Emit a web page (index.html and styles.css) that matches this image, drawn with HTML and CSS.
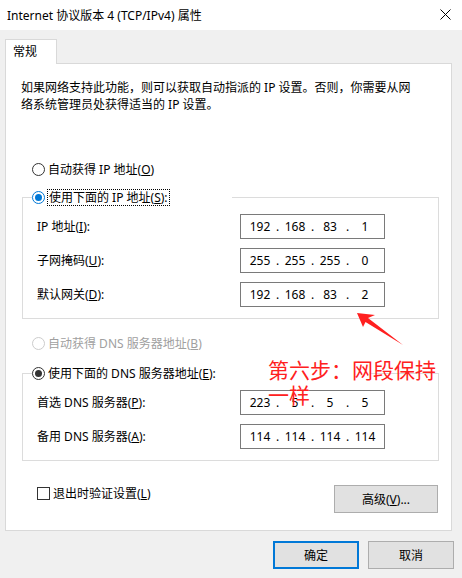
FILE: index.html
```html
<!DOCTYPE html>
<html lang="zh-CN">
<head>
    <meta charset="UTF-8">
    <title>Internet 协议版本 4 (TCP/IPv4) 属性</title>
    <link rel="stylesheet" href="styles.css">
</head>
<body>

<!-- Title bar -->
<div class="titlebar">
    <span class="title">Internet 协议版本 4 (TCP/IPv4) 属性</span>
    <svg class="close" width="11" height="11" viewBox="0 0 11 11">
        <path d="M0.5 0.5 L10.5 10.5 M10.5 0.5 L0.5 10.5" stroke="#000" stroke-width="1" fill="none"/>
    </svg>
</div>

<!-- Tabs -->
<div class="tabs">
    <div class="tab">常规</div>
</div>

<div class="panel">
    <p class="desc">如果网络支持此功能，则可以获取自动指派的 IP 设置。否则，你需要从网<br>络系统管理员处获得适当的 IP 设置。</p>

    <div class="option first"><span class="radio"></span>自动获得 IP 地址(<u>O</u>)</div>

    <fieldset class="group group-ip">
        <legend class="option legend-ip"><span class="radio checked active"></span><span class="focus-ring">使用下面的 IP 地址(<u>S</u>):</span></legend>
        <div class="fields">
            <div class="field">
                <span>IP 地址(<u>I</u>):</span>
                <div class="ip"><span>192</span><span>.</span><span>168</span><span>.</span><span>83</span><span>.</span><span>1</span></div>
            </div>
            <div class="field">
                <span>子网掩码(<u>U</u>):</span>
                <div class="ip"><span>255</span><span>.</span><span>255</span><span>.</span><span>255</span><span>.</span><span>0</span></div>
            </div>
            <div class="field">
                <span>默认网关(<u>D</u>):</span>
                <div class="ip"><span>192</span><span>.</span><span>168</span><span>.</span><span>83</span><span>.</span><span>2</span></div>
            </div>
        </div>
    </fieldset>

    <div class="option dns-auto disabled"><span class="radio"></span>自动获得 DNS 服务器地址(<u>B</u>)</div>

    <fieldset class="group group-dns">
        <legend class="option legend-dns"><span class="radio checked"></span>使用下面的 DNS 服务器地址(<u>E</u>):</legend>
        <div class="fields">
            <div class="field">
                <span>首选 DNS 服务器(<u>P</u>):</span>
                <div class="ip"><span>223</span><span>.</span><span>5</span><span>.</span><span>5</span><span>.</span><span>5</span></div>
            </div>
            <div class="field">
                <span>备用 DNS 服务器(<u>A</u>):</span>
                <div class="ip"><span>114</span><span>.</span><span>114</span><span>.</span><span>114</span><span>.</span><span>114</span></div>
            </div>
        </div>
    </fieldset>

    <div class="panel-footer">
        <div class="check-row"><span class="checkbox"></span>退出时验证设置(<u>L</u>)</div>
        <button class="btn advanced">高级(<u>V</u>)...</button>
    </div>
</div>

<!-- Dialog buttons -->
<div class="dialog-buttons">
    <button class="btn default">确定</button>
    <button class="btn">取消</button>
</div>

<!-- Annotation overlay -->
<svg class="arrow" width="60" height="42" viewBox="0 0 60 42">
    <polygon points="7,5 25,7 18,10 53,37 15.5,14 13,19" fill="#ff2020"/>
</svg>
<div class="note">第六步：网段保持一样</div>

</body>
</html>
```

FILE: styles.css
```css
html, body {
    margin: 0;
    padding: 0;
    height: 100%;
}

body {
    position: relative;
    background-color: #f0f0f0;
    font-family: "Noto Sans", "Noto Sans CJK SC", sans-serif;
    font-size: 12px;
    line-height: 17px;
    color: #000;
}

u {
    text-decoration: underline;
    text-underline-offset: 1px;
}

/* Title bar */
.titlebar {
    height: 30px;
    background-color: #fff;
    display: flex;
    align-items: center;
    justify-content: space-between;
    padding: 0 11px 0 7px;
}

.close {
    display: block;
    margin-top: -1px;
}

/* Tabs */
.tabs {
    display: flex;
    padding: 9px 0 0 5px;
}

.tab {
    position: relative;
    z-index: 1;
    width: 52px;
    height: 25px;
    box-sizing: border-box;
    padding: 3px 0 0 7px;
    margin-bottom: -1px;
    background-color: #fff;
    border: 1px solid #d9d9d9;
    border-bottom: none;
}

/* Main panel */
.panel {
    width: 447px;
    margin-left: 5px;
    box-sizing: border-box;
    background-color: #fff;
    border: 1px solid #d9d9d9;
    padding-bottom: 17px;
}

.desc {
    margin: 15px 0 0 15px;
}

.option {
    display: flex;
    align-items: center;
    height: 17px;
}

.option.first {
    margin: 48px 0 0 26px;
}

.option.dns-auto {
    margin: 16px 0 0 26px;
}

.option.disabled {
    color: #a0a0a0;
}

.radio {
    width: 13px;
    height: 13px;
    box-sizing: border-box;
    border: 1px solid #333;
    border-radius: 50%;
    background-color: #fff;
    margin-right: 3px;
    flex-shrink: 0;
    display: flex;
    align-items: center;
    justify-content: center;
}

.radio.checked::after {
    content: "";
    width: 7px;
    height: 7px;
    border-radius: 50%;
    background-color: #333;
}

.radio.active {
    border-color: #0078d7;
}

.radio.active::after {
    background-color: #0078d7;
}

.disabled .radio {
    border-color: #cccccc;
}

.focus-ring {
    border: 1px dotted #000;
    padding: 0 1px;
    margin-left: -1px;
    line-height: 15px;
}

/* Group boxes */
.group {
    width: 417px;
    box-sizing: border-box;
    margin: 0 0 0 16px;
    padding: 8px 0 11px 0;
    border: 1px solid #dcdcdc;
    min-width: 0;
}

.group-ip {
    margin-top: 11px;
}

.group-dns {
    margin-top: 13px;
}

.group legend {
    margin-left: 9px;
    padding: 0;
    background-color: #fff;
}

.legend-ip {
    width: 200px;
}

.legend-dns {
    width: 338px;
}

.fields {
    display: flex;
    flex-direction: column;
    gap: 9px;
}

.field {
    display: grid;
    grid-template-columns: 203px 145px;
    align-items: center;
    padding-left: 14px;
}

.ip {
    height: 25px;
    box-sizing: border-box;
    border: 1px solid #7a7a7a;
    padding-left: 5px;
    display: grid;
    grid-template-columns: 28px 7px 28px 7px 28px 7px 28px;
    align-items: center;
    text-align: center;
}

/* Footer of panel */
.panel-footer {
    display: flex;
    justify-content: space-between;
    align-items: flex-start;
    margin: 24px 13px 0 31px;
}

.check-row {
    display: flex;
    align-items: center;
    height: 17px;
}

.checkbox {
    width: 13px;
    height: 13px;
    box-sizing: border-box;
    border: 1px solid #333;
    background-color: #fff;
    margin-right: 3px;
}

.btn {
    font-family: inherit;
    font-size: 12px;
    color: #000;
    height: 28px;
    box-sizing: border-box;
    background-color: #e1e1e1;
    border: 1px solid #adadad;
    padding: 0;
    cursor: pointer;
}

.btn.advanced {
    width: 104px;
}

.dialog-buttons {
    display: flex;
    justify-content: flex-end;
    gap: 9px;
    margin-top: 10px;
    padding-right: 8px;
}

.dialog-buttons .btn {
    width: 86px;
}

.btn.default {
    border: 2px solid #0078d7;
}

/* Annotation */
.arrow {
    position: absolute;
    left: 350px;
    top: 308px;
}

.note {
    position: absolute;
    left: 268px;
    top: 357px;
    width: 172px;
    font-family: "Noto Sans CJK SC", sans-serif;
    font-size: 21px;
    line-height: 25px;
    color: #ff2020;
}
```
